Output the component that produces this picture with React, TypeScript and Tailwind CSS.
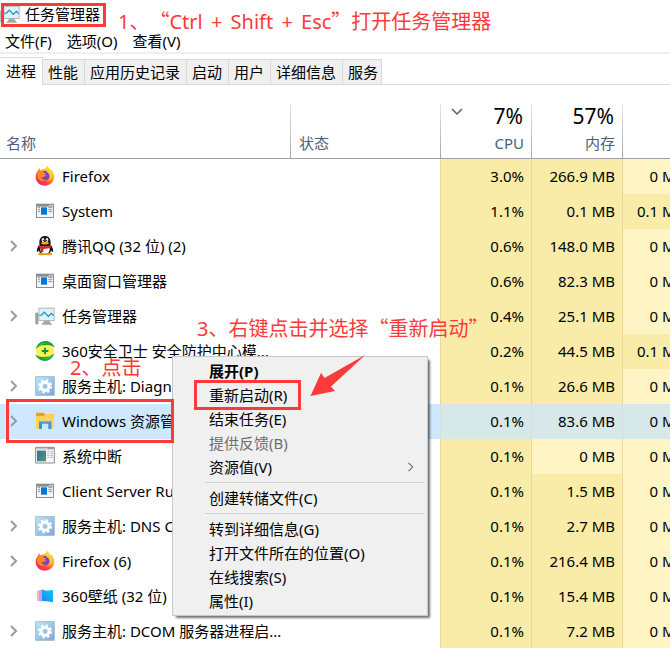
import type { ReactNode } from "react";

type IconName = "firefox" | "window" | "qq" | "taskmgr" | "shield" | "service" | "explorer" | "interrupts" | "wallpaper";

type Process = {
  name: string;
  icon: IconName;
  expandable?: boolean;
  selected?: boolean;
  cpu: string;
  memory: string;
  disk: string;
};

const processes: Process[] = [
  { name: "Firefox", icon: "firefox", cpu: "3.0%", memory: "266.9 MB", disk: "0 MB/秒" },
  { name: "System", icon: "window", cpu: "1.1%", memory: "0.1 MB", disk: "0.1 MB/秒" },
  { name: "腾讯QQ (32 位) (2)", icon: "qq", expandable: true, cpu: "0.6%", memory: "148.0 MB", disk: "0 MB/秒" },
  { name: "桌面窗口管理器", icon: "window", cpu: "0.6%", memory: "82.3 MB", disk: "0 MB/秒" },
  { name: "任务管理器", icon: "taskmgr", expandable: true, cpu: "0.4%", memory: "25.1 MB", disk: "0 MB/秒" },
  { name: "360安全卫士 安全防护中心模...", icon: "shield", cpu: "0.2%", memory: "44.5 MB", disk: "0.1 MB/秒" },
  { name: "服务主机: Diagnostic Policy ...", icon: "service", expandable: true, cpu: "0.1%", memory: "26.6 MB", disk: "0 MB/秒" },
  { name: "Windows 资源管理器", icon: "explorer", expandable: true, selected: true, cpu: "0.1%", memory: "83.6 MB", disk: "0 MB/秒" },
  { name: "系统中断", icon: "interrupts", cpu: "0.1%", memory: "0 MB", disk: "0 MB/秒" },
  { name: "Client Server Runtime Process", icon: "window", cpu: "0.1%", memory: "1.5 MB", disk: "0 MB/秒" },
  { name: "服务主机: DNS Client", icon: "service", expandable: true, cpu: "0.1%", memory: "2.7 MB", disk: "0 MB/秒" },
  { name: "Firefox (6)", icon: "firefox", expandable: true, cpu: "0.1%", memory: "216.4 MB", disk: "0 MB/秒" },
  { name: "360壁纸 (32 位)", icon: "wallpaper", cpu: "0.1%", memory: "15.4 MB", disk: "0 MB/秒" },
  { name: "服务主机: DCOM 服务器进程启...", icon: "service", expandable: true, cpu: "0.1%", memory: "7.2 MB", disk: "0 MB/秒" },
];

const tabs = ["进程", "性能", "应用历史记录", "启动", "用户", "详细信息", "服务"];

const menuGroups = [
  ["展开(P)", "重新启动(R)", "结束任务(E)", "提供反馈(B)", "资源值(V)"],
  ["创建转储文件(C)"],
  ["转到详细信息(G)", "打开文件所在的位置(O)", "在线搜索(S)", "属性(I)"],
];

const iconArt: Record<IconName, ReactNode> = {
  firefox: (
    <>
      <defs>
        <linearGradient id="fox" x1="0.85" y1="0.1" x2="0.2" y2="0.95">
          <stop offset="0" stopColor="#fff04a" />
          <stop offset="0.35" stopColor="#ffab25" />
          <stop offset="0.62" stopColor="#ff5a36" />
          <stop offset="1" stopColor="#ec1f74" />
        </linearGradient>
      </defs>
      <path d="M8 16c1-4 3-7 6-9 0 3 1 5 3 6 4-3 9-4 13-4 2-4 5-7 9-9 0 6 4 9 8 12 0-1 1-2 1-3 6 6 10 14 10 22 0 16-12 28-28 28S2 47 2 32c0-6 2-12 6-16z" fill="url(#fox)" />
      <path d="M19 22c2-5 7-8 12-7 7 0 13 6 13 14 0 8-6 13-14 13-7 0-13-4-13-10 3 3 7 3 10 1 3-1 4-3 8-3-1-3-5-3-8-4-3 0-6-2-8-4z" fill="#7542c8" />
      <path d="M8 20c4-4 10-4 14-2 2 1 5 2 8 3 3 1 4 3 2 4-4 1-5 2-6 5-1 4-5 4-8 4 2 6 9 9 15 7-9 7-23 3-26-9-1-4-1-9 1-12z" fill="#ff8a20" />
      <path d="M31 9c2-4 4-7 8-9 0 8 13 13 12 30-1 9-8 15-16 16 8-4 11-11 9-17-2-8-10-9-13-20z" fill="#ffd034" opacity=".85" />
    </>
  ),
  window: (
    <>
      <path d="M3 8h54v43H3z" fill="#868e98" />
      <path d="M6 17h48v31H6z" fill="#f7f7f7" />
      <path d="M42 11h3v3h-3zM47 11h3v3h-3zM52 11h3v3h-3z" fill="#fff" />
      <path d="M9 20h6M9 26h6M9 32h6M40 20h12M40 26h12M40 32h12" stroke="#8d959e" strokeWidth="3" />
      <path d="M18 19h18v22H18z" fill="#0078d7" />
    </>
  ),
  qq: (
    <>
      <path d="M12 28c-4 6-8 13-6 20 2 0 4-3 6-6zM48 28c4 6 8 13 6 20-2 0-4-3-6-6z" fill="#111" />
      <ellipse cx="30" cy="38" rx="20" ry="18" fill="#111" />
      <ellipse cx="30" cy="40" rx="14" ry="15" fill="#fff" />
      <path d="M13 23C12 8 19 0 30 0s18 8 17 23c0 6-7 9-17 9s-17-3-17-9z" fill="#161616" />
      <ellipse cx="24" cy="12" rx="4" ry="6" fill="#fff" />
      <ellipse cx="36" cy="12" rx="4" ry="6" fill="#fff" />
      <circle cx="25" cy="13" r="2" />
      <circle cx="35" cy="13" r="2" />
      <path d="M17 21c8-5 18-5 26 0-7 6-19 6-26 0z" fill="#f6a918" />
      <path d="M11 26c11 7 27 7 38 0v8c-8 4-16 5-24 5v9h-8V36l-6-3z" fill="#e81f25" />
      <ellipse cx="20" cy="54" rx="11" ry="4" fill="#f29a16" />
      <ellipse cx="41" cy="54" rx="11" ry="4" fill="#f29a16" />
    </>
  ),
  taskmgr: (
    <>
      <path d="M1 20h9v35H1z" fill="#9a9d9f" />
      <path d="M3 24h5v4H3z" fill="#57b94b" />
      <path d="M28 44h14l10 12H19z" fill="#a5a8aa" />
      <path d="M10 5h49v40H10z" fill="#b3b7b9" />
      <path d="M13 8h43v34H13z" fill="#dcf3fa" />
      <path d="M13 28l7-1 8-9 12 13 9-9 7 7" fill="none" stroke="#1f86c4" strokeWidth="3.5" />
    </>
  ),
  shield: (
    <>
      <circle cx="30" cy="30" r="27" fill="#fff05a" />
      <path d="M2 24C6 9 17 0 31 0c13 0 24 8 28 20-9-8-20-10-30-7-9-2-18 2-27 11z" fill="#19a53b" />
      <path d="M58 36C54 51 42 60 29 60 16 60 5 52 1 40c9 8 20 10 30 7 9 2 18-2 27-11z" fill="#19a53b" />
      <path d="M8 18C14 8 25 4 38 8 26 6 17 10 8 18zM52 42c-6 10-17 14-30 10 12 2 21-2 30-10z" fill="#7ed957" />
      <path d="M27 20h6v7h7v6h-7v7h-6v-7h-7v-6h7z" fill="#129a37" />
    </>
  ),
  service: (
    <>
      <defs>
        <linearGradient id="svc" x1="0" y1="0" x2="1" y2="1">
          <stop offset="0" stopColor="#b9eaf7" />
          <stop offset="1" stopColor="#7da3dc" />
        </linearGradient>
      </defs>
      <path d="M2 2h56v56H2z" fill="url(#svc)" stroke="#a3bccb" strokeWidth="3" />
      <circle cx="30" cy="31" r="18" fill="none" stroke="#fff" strokeWidth="7" strokeDasharray="7.1 7.03" />
      <circle cx="30" cy="31" r="12" fill="none" stroke="#fff" strokeWidth="9" />
    </>
  ),
  explorer: (
    <>
      <path d="M3 5h23l3 5h27v14H3z" fill="#dfa51f" />
      <path d="M3 15h23l5-5h25v43H3z" fill="#ffd25c" />
      <path d="M12 30h37v24H12z" fill="#3696dc" />
      <path d="M21 38h19v17H21z" fill="#cde8ff" />
      <path d="M12 30h37v4H12z" fill="#64b4eb" />
    </>
  ),
  interrupts: (
    <>
      <defs>
        <linearGradient id="irq" x1="0" y1="0" x2="1" y2="1">
          <stop offset="0" stopColor="#3f68a3" />
          <stop offset="1" stopColor="#4f9b72" />
        </linearGradient>
      </defs>
      <path d="M2 4h56v47H2z" fill="#f8f8f8" stroke="#858b92" strokeWidth="3" />
      <path d="M4 6h53v5H4z" fill="#c5cace" />
      <path d="M40 7h3M46 7h3M52 7h3" stroke="#59616b" strokeWidth="3" />
      <path d="M6 14h27v32H6z" fill="url(#irq)" />
      <path d="M37 16h6M46 16h8M37 22h6M46 22h8M37 28h6M46 28h8M37 34h6M46 34h8" stroke="#b0b6ba" strokeWidth="3" />
    </>
  ),
  wallpaper: (
    <>
      <defs>
        <linearGradient id="wall" x1="0" y1="1" x2="1" y2="0">
          <stop offset="0" stopColor="#1687f5" />
          <stop offset="1" stopColor="#18c4fa" />
        </linearGradient>
      </defs>
      <path d="M6 15l6-2v33l-6-2z" fill="#ffb6bd" />
      <path d="M12 13l8-2v36l-8-2z" fill="#c79df0" />
      <path d="M20 10l14 4 20-2v37l-19-3-15-1z" fill="url(#wall)" />
    </>
  ),
};

function Icon({ name }: { name: IconName }) {
  return (
    <svg viewBox="0 0 60 60" className="h-5 w-5 shrink-0" aria-hidden="true">
      {iconArt[name]}
    </svg>
  );
}

function Chevron({ className }: { className: string }) {
  return (
    <svg viewBox="0 0 8 12" fill="none" stroke="currentColor" className={className} aria-hidden="true">
      <path d="M1 1l5 5-5 5" />
    </svg>
  );
}

function Quote({ children }: { children: string }) {
  return <span className="font-['Noto_Sans_CJK_SC',sans-serif]">{children}</span>;
}

const columnRule = "bg-[linear-gradient(#e6e6e6,#a6a6a6)] bg-[length:1px_54px] bg-right-bottom bg-no-repeat";

function heat(value: string) {
  return value === "0 MB" || value === "0 MB/秒" ? "bg-[#fff4c4]" : "bg-[#f9eca8]";
}

function ProcessRow({ process }: { process: Process }) {
  const { selected } = process;
  const cell = "border-r pr-[7px] pb-0.5 text-right";
  const tone = (value: string) => (selected ? "border-[#d9dfe0] bg-[#d7e8e9]" : `border-[#ecd69c] ${heat(value)}`);
  return (
    <tr className={selected ? "h-[35px] bg-[#cde8ff]" : "h-[35px]"}>
      <td className="overflow-hidden pb-0.5">
        <div className="flex items-center">
          <span className="flex w-[35px] shrink-0 pl-2.5">
            {process.expandable && (
              <button type="button" aria-label={`展开 ${process.name}`} className="text-[#9b9b9b]">
                <Chevron className="h-3 w-2 stroke-2" />
              </button>
            )}
          </span>
          <Icon name={process.icon} />
          <span className="pl-[7px]">{process.name}</span>
        </div>
      </td>
      <td className={selected ? "border-r border-[#d9dfe0]" : "border-r border-[#ecd69c]"} />
      <td className={`${cell} ${tone(process.cpu)}`}>{process.cpu}</td>
      <td className={`${cell} ${tone(process.memory)}`}>{process.memory}</td>
      <td className={`${cell} ${tone(process.disk)}`}>{process.disk}</td>
    </tr>
  );
}

function ProcessTable() {
  return (
    <table className="w-full min-w-[714px] table-fixed border-separate border-spacing-0 whitespace-nowrap">
      <colgroup>
        <col />
        <col className="w-[150px]" />
        <col className="w-[91px]" />
        <col className="w-[91px]" />
        <col className="w-[91px]" />
      </colgroup>
      <thead>
        <tr className="h-[74px] align-bottom text-[#4c607a] *:border-b *:border-[#a0a0a0] *:pb-1 *:font-normal">
          <th className={`pl-1.5 text-left ${columnRule}`}>名称</th>
          <th className={`pl-2 text-left ${columnRule}`}>状态</th>
          <th className={`pr-2 text-right ${columnRule}`}>
            <div className="flex items-center justify-between pr-px pb-0.5 pl-3">
              <Chevron className="mb-2 h-3 w-2 rotate-90 stroke-[1.5]" />
              <span className="text-[21px] leading-7 text-black">7%</span>
            </div>
            CPU
          </th>
          <th className={`pr-2 text-right ${columnRule}`}>
            <div className="pr-px pb-0.5 text-[21px] leading-7 text-black">57%</div>
            内存
          </th>
          <th className={`pr-2 text-right ${columnRule}`}>
            <div className="pr-px pb-0.5 text-[21px] leading-7 text-black">0%</div>
            磁盘
          </th>
        </tr>
      </thead>
      <tbody>
        {processes.map((process, index) => (
          <ProcessRow key={index} process={process} />
        ))}
      </tbody>
    </table>
  );
}

function itemTone(label: string) {
  if (label === "展开(P)") return "font-bold";
  if (label === "提供反馈(B)") return "text-[#6d6d6d]";
  return "";
}

function ContextMenu() {
  return (
    <div
      role="menu"
      className="absolute top-[356px] left-[172px] w-64 border border-[#c8c8c8] bg-[#f0f0f0] py-0.5 shadow-[3px_3px_2px_-1px_rgba(0,0,0,0.55)]"
    >
      {menuGroups.map((group, index) => (
        <div key={group[0]}>
          {index > 0 && <hr className="my-[3px] mr-[3px] ml-8 border-[#d2d2d2]" />}
          {group.map((label) => (
            <button
              key={label}
              type="button"
              role="menuitem"
              disabled={label === "提供反馈(B)"}
              className={`flex h-6 w-full items-center justify-between pr-3 pl-9 ${itemTone(label)}`}
            >
              {label}
              {label === "资源值(V)" && <Chevron className="h-2.5 w-2" />}
            </button>
          ))}
        </div>
      ))}
    </div>
  );
}

function Annotations() {
  return (
    <div className="pointer-events-none whitespace-nowrap text-xl leading-6 text-[#fb3a39] [text-spacing-trim:space-all]">
      <div className="absolute top-[3px] left-px h-6 w-[105px] border-3 border-[#fb3a39]" />
      <p className="absolute top-[9px] left-[118px]">
        1、<Quote>“</Quote>Ctrl <span className="mx-[3px]">+</span> Shift <span className="mx-[3px]">+</span> Esc
        <Quote>”</Quote>打开任务管理器
      </p>
      <p className="absolute top-[356px] left-[70px]">2、点击</p>
      <div className="absolute top-[399px] left-1.5 h-11 w-[168px] border-3 border-[#fb3a39]" />
      <p className="absolute top-[316px] left-[197px]">
        3、右键点击并选择<Quote>“</Quote>重新启动<Quote>”</Quote>
      </p>
      <div className="absolute top-[380px] left-[194px] h-[30px] w-[107px] border-3 border-[#fb3a39]" />
      <svg viewBox="0 0 56 44" fill="currentColor" className="absolute top-[354px] left-[310px] h-11 w-14" aria-hidden="true">
        <path d="M.5 42L11 19l3.5 5L55.500.7 21 32.500l4 4.500z" />
      </svg>
    </div>
  );
}

export default function App() {
  return (
    <main className="relative h-screen overflow-hidden bg-white font-['Noto_Sans','Noto_Sans_CJK_SC',sans-serif] text-[15px] leading-[22px] text-black">
      <header className="flex h-7 items-center gap-[5px]">
        <Icon name="taskmgr" />
        <h1>任务管理器</h1>
      </header>
      <nav className="flex h-[26px] items-center gap-[15px] border-b-2 border-[#f0f0f0] pt-0.5 pl-[5px]">
        <button type="button">文件(F)</button>
        <button type="button">选项(O)</button>
        <button type="button">查看(V)</button>
      </nav>
      <div role="tablist" className="flex h-[31px] items-end border-b border-[#d9d9d9] whitespace-nowrap">
        {tabs.map((tab, index) => (
          <button
            key={tab}
            type="button"
            role="tab"
            aria-selected={index === 0}
            className={
              index === 0
                ? "-mb-px h-7 border-t border-r border-[#d9d9d9] bg-white px-1.5 pb-px"
                : "h-[25px] border-t border-r border-[#d9d9d9] bg-[#f0f0f0] pr-1.5 pl-[5px] last:pr-[3px]"
            }
          >
            {tab}
          </button>
        ))}
      </div>
      <ProcessTable />
      <ContextMenu />
      <Annotations />
    </main>
  );
}
